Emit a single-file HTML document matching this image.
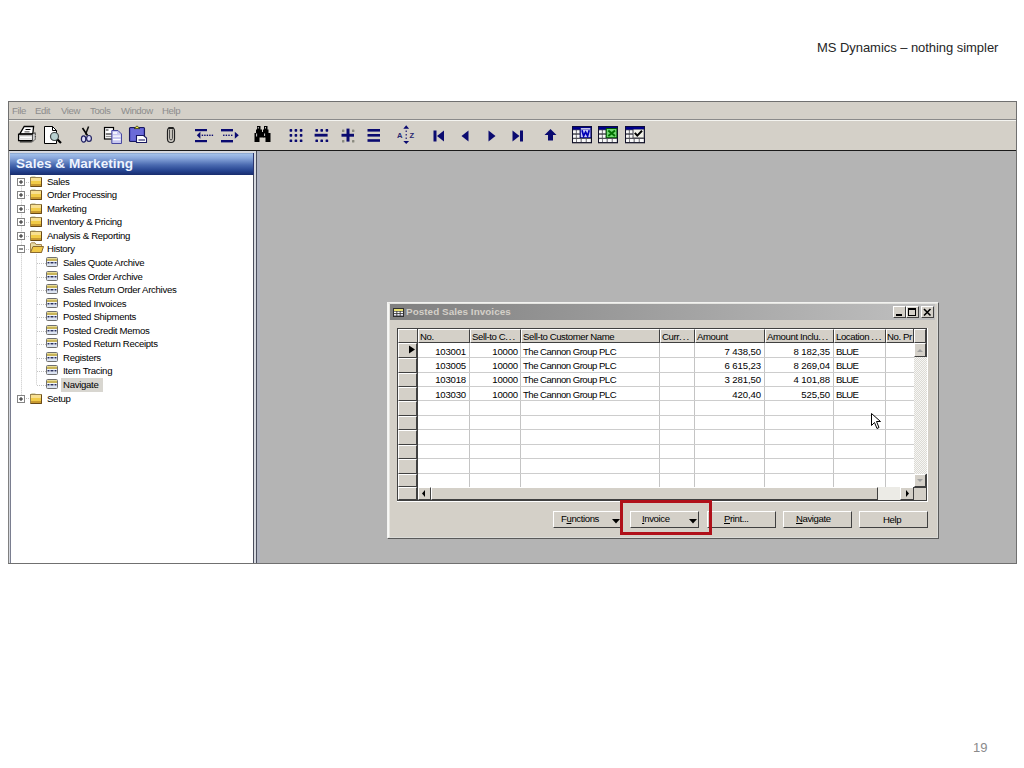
<!DOCTYPE html>
<html><head><meta charset="utf-8"><style>
*{margin:0;padding:0;box-sizing:border-box}
html,body{width:1024px;height:768px;overflow:hidden;background:#fff}
body{position:relative;font-family:"Liberation Sans",sans-serif;color:#000}
.a{position:absolute}
.t{position:absolute;white-space:nowrap;font-size:9.6px;line-height:11px;letter-spacing:-0.4px}
svg{position:absolute;overflow:visible}
.r{text-align:right}
</style></head><body>
<div class="t" style="left:817px;top:40px;font-size:13px;line-height:16px;color:#262626;letter-spacing:-0.05px">MS Dynamics – nothing simpler</div>
<div class="t" style="left:973px;top:740px;font-size:13px;line-height:15px;color:#8a8a8a;letter-spacing:0">19</div>
<div class="a" style="left:8px;top:101px;width:1009px;height:463px;border:1px solid #707070;background:#d4d0c8"></div>
<div class="a" style="left:9px;top:119px;width:1007px;height:1px;background:#8a8a8a"></div>
<div class="a" style="left:9px;top:120px;width:1007px;height:1px;background:#f4f4f0"></div>
<div class="a" style="left:9px;top:150px;width:1007px;height:1px;background:#1a1a1a"></div>
<div class="t" style="left:12px;top:105px;color:#8c8c8c">File</div>
<div class="t" style="left:35px;top:105px;color:#8c8c8c">Edit</div>
<div class="t" style="left:61px;top:105px;color:#8c8c8c">View</div>
<div class="t" style="left:90px;top:105px;color:#8c8c8c">Tools</div>
<div class="t" style="left:121px;top:105px;color:#8c8c8c">Window</div>
<div class="t" style="left:162px;top:105px;color:#8c8c8c">Help</div>
<div class="a" style="left:257px;top:151px;width:759px;height:412px;background:#b4b4b4"></div>
<div class="a" style="left:257px;top:151px;width:3px;height:412px;background:#b0b4c0"></div>
<div class="a" style="left:9px;top:151px;width:248px;height:412px;background:#d6d9e0"></div>
<div class="a" style="left:8px;top:151px;width:1px;height:412px;background:#808080"></div>
<div class="a" style="left:10px;top:175px;width:1px;height:388px;background:#7a7e90"></div>
<div class="a" style="left:253px;top:153px;width:1px;height:410px;background:#4a4e5e"></div>
<div class="a" style="left:256px;top:151px;width:1px;height:412px;background:#4a4e5e"></div>
<div class="a" style="left:11px;top:175px;width:242px;height:388px;background:#fff"></div>
<div class="a" style="left:10px;top:153px;width:243px;height:22px;background:linear-gradient(#7b95bd 0,#a3c1ea 1px,#8aa8dc 5px,#4a6ab0 12px,#24428e 18px,#182c6c 22px)"></div>
<div class="a" style="left:253px;top:153px;width:1px;height:22px;background:#2a3670"></div>
<div class="t" style="left:16px;top:155px;font-size:13.6px;line-height:17px;font-weight:bold;color:#eef4ff;letter-spacing:0px">Sales &amp; Marketing</div>
<svg style="left:0px;top:0px" width="260" height="420" viewBox="0 0 260 420"><line x1="21.5" y1="181.7" x2="21.5" y2="398.5" stroke="#c4c4c4" stroke-dasharray="1 1"/><line x1="36.5" y1="254.4" x2="36.5" y2="384.9" stroke="#c4c4c4" stroke-dasharray="1 1"/><line x1="26" y1="182.5" x2="30" y2="182.5" stroke="#c4c4c4" stroke-dasharray="1 1"/><line x1="26" y1="195.5" x2="30" y2="195.5" stroke="#c4c4c4" stroke-dasharray="1 1"/><line x1="26" y1="209.5" x2="30" y2="209.5" stroke="#c4c4c4" stroke-dasharray="1 1"/><line x1="26" y1="222.5" x2="30" y2="222.5" stroke="#c4c4c4" stroke-dasharray="1 1"/><line x1="26" y1="236.5" x2="30" y2="236.5" stroke="#c4c4c4" stroke-dasharray="1 1"/><line x1="26" y1="249.5" x2="30" y2="249.5" stroke="#c4c4c4" stroke-dasharray="1 1"/><line x1="26" y1="398.5" x2="30" y2="398.5" stroke="#c4c4c4" stroke-dasharray="1 1"/><line x1="37" y1="263.5" x2="46" y2="263.5" stroke="#c4c4c4" stroke-dasharray="1 1"/><line x1="37" y1="277.5" x2="46" y2="277.5" stroke="#c4c4c4" stroke-dasharray="1 1"/><line x1="37" y1="290.5" x2="46" y2="290.5" stroke="#c4c4c4" stroke-dasharray="1 1"/><line x1="37" y1="304.5" x2="46" y2="304.5" stroke="#c4c4c4" stroke-dasharray="1 1"/><line x1="37" y1="317.5" x2="46" y2="317.5" stroke="#c4c4c4" stroke-dasharray="1 1"/><line x1="37" y1="331.5" x2="46" y2="331.5" stroke="#c4c4c4" stroke-dasharray="1 1"/><line x1="37" y1="344.5" x2="46" y2="344.5" stroke="#c4c4c4" stroke-dasharray="1 1"/><line x1="37" y1="358.5" x2="46" y2="358.5" stroke="#c4c4c4" stroke-dasharray="1 1"/><line x1="37" y1="371.5" x2="46" y2="371.5" stroke="#c4c4c4" stroke-dasharray="1 1"/><line x1="37" y1="385.5" x2="46" y2="385.5" stroke="#c4c4c4" stroke-dasharray="1 1"/></svg>
<svg style="left:17px;top:178px" width="8" height="8" viewBox="0 0 8 8"><rect x="0.5" y="0.5" width="7" height="7" fill="#fff" stroke="#848484"/><path d="M2 4 H6" stroke="#202020"/><path d="M4 2 V6" stroke="#202020"/></svg>
<svg style="left:30px;top:176px" width="13" height="11" viewBox="0 0 13 11"><path d="M1.5 1.5 L1.5 0.8 L5 0.8 L6 1.5 Z" fill="#d8e0b0" stroke="#c0c090" stroke-width="0.8"/><rect x="0.5" y="1.5" width="11" height="9" fill="#f2cc48" stroke="#9a8450"/><rect x="1" y="2" width="10" height="3" fill="#f8e090"/><rect x="1" y="8" width="10" height="2" fill="#c89a30"/><path d="M11.5 2 V10.5 H1" fill="none" stroke="#6a4a18"/></svg>
<div class="t" style="left:47px;top:176px;letter-spacing:-0.3px">Sales</div>
<svg style="left:17px;top:191px" width="8" height="8" viewBox="0 0 8 8"><rect x="0.5" y="0.5" width="7" height="7" fill="#fff" stroke="#848484"/><path d="M2 4 H6" stroke="#202020"/><path d="M4 2 V6" stroke="#202020"/></svg>
<svg style="left:30px;top:189px" width="13" height="11" viewBox="0 0 13 11"><path d="M1.5 1.5 L1.5 0.8 L5 0.8 L6 1.5 Z" fill="#d8e0b0" stroke="#c0c090" stroke-width="0.8"/><rect x="0.5" y="1.5" width="11" height="9" fill="#f2cc48" stroke="#9a8450"/><rect x="1" y="2" width="10" height="3" fill="#f8e090"/><rect x="1" y="8" width="10" height="2" fill="#c89a30"/><path d="M11.5 2 V10.5 H1" fill="none" stroke="#6a4a18"/></svg>
<div class="t" style="left:47px;top:189px;letter-spacing:-0.3px">Order Processing</div>
<svg style="left:17px;top:205px" width="8" height="8" viewBox="0 0 8 8"><rect x="0.5" y="0.5" width="7" height="7" fill="#fff" stroke="#848484"/><path d="M2 4 H6" stroke="#202020"/><path d="M4 2 V6" stroke="#202020"/></svg>
<svg style="left:30px;top:203px" width="13" height="11" viewBox="0 0 13 11"><path d="M1.5 1.5 L1.5 0.8 L5 0.8 L6 1.5 Z" fill="#d8e0b0" stroke="#c0c090" stroke-width="0.8"/><rect x="0.5" y="1.5" width="11" height="9" fill="#f2cc48" stroke="#9a8450"/><rect x="1" y="2" width="10" height="3" fill="#f8e090"/><rect x="1" y="8" width="10" height="2" fill="#c89a30"/><path d="M11.5 2 V10.5 H1" fill="none" stroke="#6a4a18"/></svg>
<div class="t" style="left:47px;top:203px;letter-spacing:-0.3px">Marketing</div>
<svg style="left:17px;top:218px" width="8" height="8" viewBox="0 0 8 8"><rect x="0.5" y="0.5" width="7" height="7" fill="#fff" stroke="#848484"/><path d="M2 4 H6" stroke="#202020"/><path d="M4 2 V6" stroke="#202020"/></svg>
<svg style="left:30px;top:216px" width="13" height="11" viewBox="0 0 13 11"><path d="M1.5 1.5 L1.5 0.8 L5 0.8 L6 1.5 Z" fill="#d8e0b0" stroke="#c0c090" stroke-width="0.8"/><rect x="0.5" y="1.5" width="11" height="9" fill="#f2cc48" stroke="#9a8450"/><rect x="1" y="2" width="10" height="3" fill="#f8e090"/><rect x="1" y="8" width="10" height="2" fill="#c89a30"/><path d="M11.5 2 V10.5 H1" fill="none" stroke="#6a4a18"/></svg>
<div class="t" style="left:47px;top:216px;letter-spacing:-0.3px">Inventory &amp; Pricing</div>
<svg style="left:17px;top:232px" width="8" height="8" viewBox="0 0 8 8"><rect x="0.5" y="0.5" width="7" height="7" fill="#fff" stroke="#848484"/><path d="M2 4 H6" stroke="#202020"/><path d="M4 2 V6" stroke="#202020"/></svg>
<svg style="left:30px;top:230px" width="13" height="11" viewBox="0 0 13 11"><path d="M1.5 1.5 L1.5 0.8 L5 0.8 L6 1.5 Z" fill="#d8e0b0" stroke="#c0c090" stroke-width="0.8"/><rect x="0.5" y="1.5" width="11" height="9" fill="#f2cc48" stroke="#9a8450"/><rect x="1" y="2" width="10" height="3" fill="#f8e090"/><rect x="1" y="8" width="10" height="2" fill="#c89a30"/><path d="M11.5 2 V10.5 H1" fill="none" stroke="#6a4a18"/></svg>
<div class="t" style="left:47px;top:230px;letter-spacing:-0.3px">Analysis &amp; Reporting</div>
<svg style="left:17px;top:245px" width="8" height="8" viewBox="0 0 8 8"><rect x="0.5" y="0.5" width="7" height="7" fill="#fff" stroke="#848484"/><path d="M2 4 H6" stroke="#202020"/></svg>
<svg style="left:30px;top:242px" width="14" height="11" viewBox="0 0 14 11"><path d="M0.5 1.5 L0.5 10.5 L11.5 10.5 L11.5 2.5 L6 2.5 L5 0.8 L1.5 0.8 Z" fill="#e8dca8" stroke="#a88850"/><path d="M0.5 10.5 L3 4.5 L13.5 4.5 L11.5 10.5 Z" fill="#f0c848" stroke="#8a6a30"/></svg>
<div class="t" style="left:47px;top:243px;letter-spacing:-0.3px">History</div>
<svg style="left:46px;top:257px" width="12" height="10" viewBox="0 0 12 10"><rect x="0.5" y="0.5" width="11" height="9" rx="1" fill="#f0f4fa" stroke="#707070"/><rect x="1" y="1" width="10" height="3" fill="#c8b45a"/><rect x="1" y="1" width="10" height="1" fill="#e8dc98"/><path d="M1.5 5.8 H3.5 M4.5 5.8 H7.5 M8.5 5.8 H10.5" stroke="#283060" stroke-width="1.6"/><rect x="1" y="7.2" width="10" height="1.6" fill="#d8e0f0"/></svg>
<div class="t" style="left:63px;top:257px;letter-spacing:-0.3px">Sales Quote Archive</div>
<svg style="left:46px;top:271px" width="12" height="10" viewBox="0 0 12 10"><rect x="0.5" y="0.5" width="11" height="9" rx="1" fill="#f0f4fa" stroke="#707070"/><rect x="1" y="1" width="10" height="3" fill="#c8b45a"/><rect x="1" y="1" width="10" height="1" fill="#e8dc98"/><path d="M1.5 5.8 H3.5 M4.5 5.8 H7.5 M8.5 5.8 H10.5" stroke="#283060" stroke-width="1.6"/><rect x="1" y="7.2" width="10" height="1.6" fill="#d8e0f0"/></svg>
<div class="t" style="left:63px;top:271px;letter-spacing:-0.3px">Sales Order Archive</div>
<svg style="left:46px;top:284px" width="12" height="10" viewBox="0 0 12 10"><rect x="0.5" y="0.5" width="11" height="9" rx="1" fill="#f0f4fa" stroke="#707070"/><rect x="1" y="1" width="10" height="3" fill="#c8b45a"/><rect x="1" y="1" width="10" height="1" fill="#e8dc98"/><path d="M1.5 5.8 H3.5 M4.5 5.8 H7.5 M8.5 5.8 H10.5" stroke="#283060" stroke-width="1.6"/><rect x="1" y="7.2" width="10" height="1.6" fill="#d8e0f0"/></svg>
<div class="t" style="left:63px;top:284px;letter-spacing:-0.3px">Sales Return Order Archives</div>
<svg style="left:46px;top:298px" width="12" height="10" viewBox="0 0 12 10"><rect x="0.5" y="0.5" width="11" height="9" rx="1" fill="#f0f4fa" stroke="#707070"/><rect x="1" y="1" width="10" height="3" fill="#c8b45a"/><rect x="1" y="1" width="10" height="1" fill="#e8dc98"/><path d="M1.5 5.8 H3.5 M4.5 5.8 H7.5 M8.5 5.8 H10.5" stroke="#283060" stroke-width="1.6"/><rect x="1" y="7.2" width="10" height="1.6" fill="#d8e0f0"/></svg>
<div class="t" style="left:63px;top:298px;letter-spacing:-0.3px">Posted Invoices</div>
<svg style="left:46px;top:311px" width="12" height="10" viewBox="0 0 12 10"><rect x="0.5" y="0.5" width="11" height="9" rx="1" fill="#f0f4fa" stroke="#707070"/><rect x="1" y="1" width="10" height="3" fill="#c8b45a"/><rect x="1" y="1" width="10" height="1" fill="#e8dc98"/><path d="M1.5 5.8 H3.5 M4.5 5.8 H7.5 M8.5 5.8 H10.5" stroke="#283060" stroke-width="1.6"/><rect x="1" y="7.2" width="10" height="1.6" fill="#d8e0f0"/></svg>
<div class="t" style="left:63px;top:311px;letter-spacing:-0.3px">Posted Shipments</div>
<svg style="left:46px;top:325px" width="12" height="10" viewBox="0 0 12 10"><rect x="0.5" y="0.5" width="11" height="9" rx="1" fill="#f0f4fa" stroke="#707070"/><rect x="1" y="1" width="10" height="3" fill="#c8b45a"/><rect x="1" y="1" width="10" height="1" fill="#e8dc98"/><path d="M1.5 5.8 H3.5 M4.5 5.8 H7.5 M8.5 5.8 H10.5" stroke="#283060" stroke-width="1.6"/><rect x="1" y="7.2" width="10" height="1.6" fill="#d8e0f0"/></svg>
<div class="t" style="left:63px;top:325px;letter-spacing:-0.3px">Posted Credit Memos</div>
<svg style="left:46px;top:338px" width="12" height="10" viewBox="0 0 12 10"><rect x="0.5" y="0.5" width="11" height="9" rx="1" fill="#f0f4fa" stroke="#707070"/><rect x="1" y="1" width="10" height="3" fill="#c8b45a"/><rect x="1" y="1" width="10" height="1" fill="#e8dc98"/><path d="M1.5 5.8 H3.5 M4.5 5.8 H7.5 M8.5 5.8 H10.5" stroke="#283060" stroke-width="1.6"/><rect x="1" y="7.2" width="10" height="1.6" fill="#d8e0f0"/></svg>
<div class="t" style="left:63px;top:338px;letter-spacing:-0.3px">Posted Return Receipts</div>
<svg style="left:46px;top:352px" width="12" height="10" viewBox="0 0 12 10"><rect x="0.5" y="0.5" width="11" height="9" rx="1" fill="#f0f4fa" stroke="#707070"/><rect x="1" y="1" width="10" height="3" fill="#c8b45a"/><rect x="1" y="1" width="10" height="1" fill="#e8dc98"/><path d="M1.5 5.8 H3.5 M4.5 5.8 H7.5 M8.5 5.8 H10.5" stroke="#283060" stroke-width="1.6"/><rect x="1" y="7.2" width="10" height="1.6" fill="#d8e0f0"/></svg>
<div class="t" style="left:63px;top:352px;letter-spacing:-0.3px">Registers</div>
<svg style="left:46px;top:365px" width="12" height="10" viewBox="0 0 12 10"><rect x="0.5" y="0.5" width="11" height="9" rx="1" fill="#f0f4fa" stroke="#707070"/><rect x="1" y="1" width="10" height="3" fill="#c8b45a"/><rect x="1" y="1" width="10" height="1" fill="#e8dc98"/><path d="M1.5 5.8 H3.5 M4.5 5.8 H7.5 M8.5 5.8 H10.5" stroke="#283060" stroke-width="1.6"/><rect x="1" y="7.2" width="10" height="1.6" fill="#d8e0f0"/></svg>
<div class="t" style="left:63px;top:365px;letter-spacing:-0.3px">Item Tracing</div>
<div class="a" style="left:61px;top:378px;width:42px;height:14px;background:#d8d6d0"></div>
<svg style="left:46px;top:379px" width="12" height="10" viewBox="0 0 12 10"><rect x="0.5" y="0.5" width="11" height="9" rx="1" fill="#f0f4fa" stroke="#707070"/><rect x="1" y="1" width="10" height="3" fill="#c8b45a"/><rect x="1" y="1" width="10" height="1" fill="#e8dc98"/><path d="M1.5 5.8 H3.5 M4.5 5.8 H7.5 M8.5 5.8 H10.5" stroke="#283060" stroke-width="1.6"/><rect x="1" y="7.2" width="10" height="1.6" fill="#d8e0f0"/></svg>
<div class="t" style="left:63px;top:379px;letter-spacing:-0.3px">Navigate</div>
<svg style="left:17px;top:395px" width="8" height="8" viewBox="0 0 8 8"><rect x="0.5" y="0.5" width="7" height="7" fill="#fff" stroke="#848484"/><path d="M2 4 H6" stroke="#202020"/><path d="M4 2 V6" stroke="#202020"/></svg>
<svg style="left:30px;top:393px" width="13" height="11" viewBox="0 0 13 11"><path d="M1.5 1.5 L1.5 0.8 L5 0.8 L6 1.5 Z" fill="#d8e0b0" stroke="#c0c090" stroke-width="0.8"/><rect x="0.5" y="1.5" width="11" height="9" fill="#f2cc48" stroke="#9a8450"/><rect x="1" y="2" width="10" height="3" fill="#f8e090"/><rect x="1" y="8" width="10" height="2" fill="#c89a30"/><path d="M11.5 2 V10.5 H1" fill="none" stroke="#6a4a18"/></svg>
<div class="t" style="left:47px;top:393px;letter-spacing:-0.3px">Setup</div>
<div class="a" style="left:387px;top:302px;width:552px;height:237px;background:#d4d0c8;border-top:1px solid #f2f2f0;border-left:1px solid #f4f4f2;border-right:1px solid #5a5a5a;border-bottom:1px solid #5a5a5a"></div>
<div class="a" style="left:388px;top:303px;width:550px;height:235px;border-top:1px solid #e4e4e0;border-left:1px solid #f8f8f6;border-right:1px solid #dcdcd8;border-bottom:1px solid #dcdcd8"></div>
<div class="a" style="left:389px;top:304px;width:1px;height:233px;background:#e6e5e0"></div>
<div class="a" style="left:390px;top:304px;width:545px;height:16px;background:linear-gradient(90deg,#808080,#c0c0c0)"></div>
<div class="t" style="left:406px;top:306px;font-weight:bold;color:#d4d0c8;font-size:9.9px;letter-spacing:0.05px">Posted Sales Invoices</div>
<div class="a" style="left:893px;top:306px;width:13px;height:12px;background:#d4d0c8;border-top:1px solid #fff;border-left:1px solid #fff;border-right:1px solid #404040;border-bottom:1px solid #404040"></div>
<div class="a" style="left:906px;top:306px;width:13px;height:12px;background:#d4d0c8;border-top:1px solid #fff;border-left:1px solid #fff;border-right:1px solid #404040;border-bottom:1px solid #404040"></div>
<div class="a" style="left:921px;top:306px;width:13px;height:12px;background:#d4d0c8;border-top:1px solid #fff;border-left:1px solid #fff;border-right:1px solid #404040;border-bottom:1px solid #404040"></div>
<svg style="left:893px;top:306px" width="13" height="12" viewBox="0 0 13 12"><rect x="3" y="8" width="6" height="2" fill="#000"/></svg>
<svg style="left:906px;top:306px" width="13" height="12" viewBox="0 0 13 12"><rect x="2.5" y="2.5" width="7" height="7" fill="none" stroke="#000"/><rect x="2" y="2" width="8" height="2" fill="#000"/></svg>
<svg style="left:921px;top:306px" width="13" height="12" viewBox="0 0 13 12"><path d="M3 3 L9.5 9.5 M9.5 3 L3 9.5" stroke="#000" stroke-width="1.6"/></svg>
<svg style="left:393px;top:308px" width="11" height="9" viewBox="0 0 11 9"><rect x="0" y="0" width="11" height="9" fill="#303030"/><rect x="1" y="1" width="9" height="2" fill="#e8e070"/><rect x="1" y="3.6" width="2.4" height="1.6" fill="#fff"/><rect x="4.3" y="3.6" width="2.4" height="1.6" fill="#fff"/><rect x="7.6" y="3.6" width="2.4" height="1.6" fill="#fff"/><rect x="1" y="6" width="2.4" height="1.6" fill="#e8e8f8"/><rect x="4.3" y="6" width="2.4" height="1.6" fill="#e8e8f8"/><rect x="7.6" y="6" width="2.4" height="1.6" fill="#e8e8f8"/></svg>
<div class="a" style="left:397px;top:328px;width:530px;height:173px;background:#d4d0c8;border:1px solid #404040"></div>
<div class="a" style="left:398px;top:329px;width:20px;height:14px;background:#d4d0c8;border-top:1px solid #fff;border-left:1px solid #fff;border-right:1px solid #404040;border-bottom:1px solid #404040"></div>
<div class="a" style="left:418px;top:329px;width:52px;height:14px;background:#d4d0c8;border-top:1px solid #fff;border-left:1px solid #fff;border-right:1px solid #404040;border-bottom:1px solid #404040"></div>
<div class="a" style="left:470px;top:329px;width:51px;height:14px;background:#d4d0c8;border-top:1px solid #fff;border-left:1px solid #fff;border-right:1px solid #404040;border-bottom:1px solid #404040"></div>
<div class="a" style="left:521px;top:329px;width:139px;height:14px;background:#d4d0c8;border-top:1px solid #fff;border-left:1px solid #fff;border-right:1px solid #404040;border-bottom:1px solid #404040"></div>
<div class="a" style="left:660px;top:329px;width:35px;height:14px;background:#d4d0c8;border-top:1px solid #fff;border-left:1px solid #fff;border-right:1px solid #404040;border-bottom:1px solid #404040"></div>
<div class="a" style="left:695px;top:329px;width:70px;height:14px;background:#d4d0c8;border-top:1px solid #fff;border-left:1px solid #fff;border-right:1px solid #404040;border-bottom:1px solid #404040"></div>
<div class="a" style="left:765px;top:329px;width:69px;height:14px;background:#d4d0c8;border-top:1px solid #fff;border-left:1px solid #fff;border-right:1px solid #404040;border-bottom:1px solid #404040"></div>
<div class="a" style="left:834px;top:329px;width:52px;height:14px;background:#d4d0c8;border-top:1px solid #fff;border-left:1px solid #fff;border-right:1px solid #404040;border-bottom:1px solid #404040"></div>
<div class="a" style="left:886px;top:329px;width:28px;height:14px;background:#d4d0c8;border-top:1px solid #fff;border-left:1px solid #fff;border-right:1px solid #404040;border-bottom:1px solid #404040"></div>
<div class="a" style="left:914px;top:329px;width:12px;height:14px;background:#d4d0c8;border-top:1px solid #fff;border-left:1px solid #fff;border-right:1px solid #404040;border-bottom:1px solid #404040"></div>
<div class="a" style="left:418px;top:343px;width:496px;height:144px;background:#fff"></div>
<div class="a" style="left:469px;top:343px;width:1px;height:144px;background:#c4c4c4"></div>
<div class="a" style="left:520px;top:343px;width:1px;height:144px;background:#c4c4c4"></div>
<div class="a" style="left:659px;top:343px;width:1px;height:144px;background:#c4c4c4"></div>
<div class="a" style="left:694px;top:343px;width:1px;height:144px;background:#c4c4c4"></div>
<div class="a" style="left:764px;top:343px;width:1px;height:144px;background:#c4c4c4"></div>
<div class="a" style="left:833px;top:343px;width:1px;height:144px;background:#c4c4c4"></div>
<div class="a" style="left:885px;top:343px;width:1px;height:144px;background:#c4c4c4"></div>
<div class="a" style="left:418px;top:357px;width:496px;height:1px;background:#cdcdcd"></div>
<div class="a" style="left:418px;top:372px;width:496px;height:1px;background:#cdcdcd"></div>
<div class="a" style="left:418px;top:386px;width:496px;height:1px;background:#cdcdcd"></div>
<div class="a" style="left:418px;top:400px;width:496px;height:1px;background:#cdcdcd"></div>
<div class="a" style="left:418px;top:415px;width:496px;height:1px;background:#cdcdcd"></div>
<div class="a" style="left:418px;top:429px;width:496px;height:1px;background:#cdcdcd"></div>
<div class="a" style="left:418px;top:444px;width:496px;height:1px;background:#cdcdcd"></div>
<div class="a" style="left:418px;top:458px;width:496px;height:1px;background:#cdcdcd"></div>
<div class="a" style="left:418px;top:473px;width:496px;height:1px;background:#cdcdcd"></div>
<div class="a" style="left:398px;top:343px;width:19px;height:15px;background:#d4d0c8;border-top:1px solid #fff;border-left:1px solid #fff;border-right:1px solid #404040;border-bottom:1px solid #404040"></div>
<div class="a" style="left:398px;top:358px;width:19px;height:15px;background:#d4d0c8;border-top:1px solid #fff;border-left:1px solid #fff;border-right:1px solid #404040;border-bottom:1px solid #404040"></div>
<div class="a" style="left:398px;top:373px;width:19px;height:14px;background:#d4d0c8;border-top:1px solid #fff;border-left:1px solid #fff;border-right:1px solid #404040;border-bottom:1px solid #404040"></div>
<div class="a" style="left:398px;top:387px;width:19px;height:14px;background:#d4d0c8;border-top:1px solid #fff;border-left:1px solid #fff;border-right:1px solid #404040;border-bottom:1px solid #404040"></div>
<div class="a" style="left:398px;top:401px;width:19px;height:15px;background:#d4d0c8;border-top:1px solid #fff;border-left:1px solid #fff;border-right:1px solid #404040;border-bottom:1px solid #404040"></div>
<div class="a" style="left:398px;top:416px;width:19px;height:14px;background:#d4d0c8;border-top:1px solid #fff;border-left:1px solid #fff;border-right:1px solid #404040;border-bottom:1px solid #404040"></div>
<div class="a" style="left:398px;top:430px;width:19px;height:15px;background:#d4d0c8;border-top:1px solid #fff;border-left:1px solid #fff;border-right:1px solid #404040;border-bottom:1px solid #404040"></div>
<div class="a" style="left:398px;top:445px;width:19px;height:14px;background:#d4d0c8;border-top:1px solid #fff;border-left:1px solid #fff;border-right:1px solid #404040;border-bottom:1px solid #404040"></div>
<div class="a" style="left:398px;top:459px;width:19px;height:15px;background:#d4d0c8;border-top:1px solid #fff;border-left:1px solid #fff;border-right:1px solid #404040;border-bottom:1px solid #404040"></div>
<div class="a" style="left:398px;top:474px;width:19px;height:13px;background:#d4d0c8;border-top:1px solid #fff;border-left:1px solid #fff;border-right:1px solid #404040;border-bottom:1px solid #404040"></div>
<div class="a" style="left:417px;top:329px;width:1px;height:172px;background:#404040"></div>
<div class="t" style="left:420px;top:331px;">No.</div>
<div class="t" style="left:472px;top:331px;">Sell-to C<span style="letter-spacing:1px">...</span></div>
<div class="t" style="left:523px;top:331px;">Sell-to Customer Name</div>
<div class="t" style="left:662px;top:331px;">Curr<span style="letter-spacing:1px">...</span></div>
<div class="t" style="left:697px;top:331px;">Amount</div>
<div class="t" style="left:767px;top:331px;">Amount Inclu<span style="letter-spacing:1px">...</span></div>
<div class="t" style="left:836px;top:331px;">Location <span style="letter-spacing:1px">...</span></div>
<div class="t" style="left:887px;top:331px;">No. Pr</div>
<div class="a" style="left:913px;top:329px;width:1px;height:14px;background:#404040"></div>
<div class="t" style="right:558px;top:346px;letter-spacing:-0.2px">103001</div>
<div class="t" style="right:506px;top:346px;letter-spacing:-0.2px">10000</div>
<div class="t" style="left:523px;top:346px;letter-spacing:-0.52px">The Cannon Group PLC</div>
<div class="t" style="right:263px;top:346px;letter-spacing:-0.1px">7 438,50</div>
<div class="t" style="right:194px;top:346px;letter-spacing:-0.1px">8 182,35</div>
<div class="t" style="left:836px;top:346px;letter-spacing:-0.7px">BLUE</div>
<div class="t" style="right:558px;top:360px;letter-spacing:-0.2px">103005</div>
<div class="t" style="right:506px;top:360px;letter-spacing:-0.2px">10000</div>
<div class="t" style="left:523px;top:360px;letter-spacing:-0.52px">The Cannon Group PLC</div>
<div class="t" style="right:263px;top:360px;letter-spacing:-0.1px">6 615,23</div>
<div class="t" style="right:194px;top:360px;letter-spacing:-0.1px">8 269,04</div>
<div class="t" style="left:836px;top:360px;letter-spacing:-0.7px">BLUE</div>
<div class="t" style="right:558px;top:374px;letter-spacing:-0.2px">103018</div>
<div class="t" style="right:506px;top:374px;letter-spacing:-0.2px">10000</div>
<div class="t" style="left:523px;top:374px;letter-spacing:-0.52px">The Cannon Group PLC</div>
<div class="t" style="right:263px;top:374px;letter-spacing:-0.1px">3 281,50</div>
<div class="t" style="right:194px;top:374px;letter-spacing:-0.1px">4 101,88</div>
<div class="t" style="left:836px;top:374px;letter-spacing:-0.7px">BLUE</div>
<div class="t" style="right:558px;top:389px;letter-spacing:-0.2px">103030</div>
<div class="t" style="right:506px;top:389px;letter-spacing:-0.2px">10000</div>
<div class="t" style="left:523px;top:389px;letter-spacing:-0.52px">The Cannon Group PLC</div>
<div class="t" style="right:263px;top:389px;letter-spacing:-0.1px">420,40</div>
<div class="t" style="right:194px;top:389px;letter-spacing:-0.1px">525,50</div>
<div class="t" style="left:836px;top:389px;letter-spacing:-0.7px">BLUE</div>
<svg style="left:408px;top:345px" width="8" height="10" viewBox="0 0 8 10"><path d="M1 0.5 L7 4.5 L1 8.5 Z" fill="#000"/></svg>
<div class="a" style="left:914px;top:343px;width:12px;height:144px;background:#ecebe6"></div>
<div class="a" style="left:914px;top:343px;width:12px;height:14px;background:#d4d0c8;border-top:1px solid #fff;border-left:1px solid #fff;border-right:1px solid #404040;border-bottom:1px solid #404040"></div>
<svg style="left:914px;top:343px" width="12" height="14" viewBox="0 0 12 14"><path d="M3 9 L6 6 L9 9 Z" fill="#a0a0a0"/></svg>
<div class="a" style="left:914px;top:474px;width:12px;height:13px;background:#d4d0c8;border-top:1px solid #fff;border-left:1px solid #fff;border-right:1px solid #404040;border-bottom:1px solid #404040"></div>
<svg style="left:914px;top:474px" width="12" height="13" viewBox="0 0 12 13"><path d="M3 5 L6 8 L9 5 Z" fill="#a0a0a0"/></svg>
<div class="a" style="left:398px;top:487px;width:19px;height:13px;background:#d4d0c8;border-top:1px solid #fff;border-left:1px solid #fff;border-right:1px solid #404040;border-bottom:1px solid #404040"></div>
<div class="a" style="left:418px;top:487px;width:13px;height:13px;background:#d4d0c8;border-top:1px solid #fff;border-left:1px solid #fff;border-right:1px solid #404040;border-bottom:1px solid #404040"></div>
<svg style="left:418px;top:487px" width="13" height="13" viewBox="0 0 13 13"><path d="M7 3 L4 6.5 L7 10 Z" fill="#000"/></svg>
<div class="a" style="left:431px;top:487px;width:469px;height:13px;background:#ecebe6"></div>
<div class="a" style="left:431px;top:487px;width:447px;height:13px;background:#d4d0c8;border-top:1px solid #fff;border-left:1px solid #fff;border-right:1px solid #404040;border-bottom:1px solid #404040"></div>
<div class="a" style="left:900px;top:487px;width:14px;height:13px;background:#d4d0c8;border-top:1px solid #fff;border-left:1px solid #fff;border-right:1px solid #404040;border-bottom:1px solid #404040"></div>
<svg style="left:900px;top:487px" width="14" height="13" viewBox="0 0 14 13"><path d="M6 3 L9 6.5 L6 10 Z" fill="#000"/></svg>
<div class="a" style="left:913px;top:487px;width:14px;height:14px;background:#d4d0c8;border:1px solid #404040"></div>
<div class="a" style="left:914px;top:357px;width:14px;height:117px;background:repeating-conic-gradient(#f6f6f4 0 25%,#dcdad4 0 50%) 0 0/2px 2px"></div>
<div class="a" style="left:397px;top:501px;width:531px;height:1px;background:#fff"></div>
<div class="a" style="left:927px;top:328px;width:1px;height:174px;background:#fff"></div>
<div class="a" style="left:553px;top:511px;width:69px;height:17px;background:#d4d0c8;border-top:1px solid #fff;border-left:1px solid #fff;border-right:1px solid #404040;border-bottom:1px solid #404040"></div>
<div class="t" style="left:561px;top:513px;">F<u>u</u>nctions</div>
<svg style="left:612px;top:519px" width="8" height="5" viewBox="0 0 8 5"><path d="M0 0 H8 L4 4.5 Z" fill="#000"/></svg>
<div class="a" style="left:630px;top:511px;width:69px;height:17px;background:#d4d0c8;border-top:1px solid #fff;border-left:1px solid #fff;border-right:1px solid #404040;border-bottom:1px solid #404040"></div>
<div class="t" style="left:642px;top:513px;"><u>I</u>nvoice</div>
<svg style="left:689px;top:519px" width="8" height="5" viewBox="0 0 8 5"><path d="M0 0 H8 L4 4.5 Z" fill="#000"/></svg>
<div class="a" style="left:707px;top:511px;width:69px;height:17px;background:#d4d0c8;border-top:1px solid #fff;border-left:1px solid #fff;border-right:1px solid #404040;border-bottom:1px solid #404040"></div>
<div class="t" style="left:724px;top:513px;"><u>P</u>rint...</div>
<div class="a" style="left:783px;top:511px;width:69px;height:17px;background:#d4d0c8;border-top:1px solid #fff;border-left:1px solid #fff;border-right:1px solid #404040;border-bottom:1px solid #404040"></div>
<div class="t" style="left:796px;top:513px;"><u>N</u>avigate</div>
<div class="a" style="left:859px;top:511px;width:69px;height:17px;background:#d4d0c8;border-top:1px solid #fff;border-left:1px solid #fff;border-right:1px solid #404040;border-bottom:1px solid #404040"></div>
<div class="t" style="left:883px;top:514px;">Help</div>
<div class="a" style="left:620px;top:500px;width:92px;height:35px;border:3px solid #b0101a"></div>
<svg style="left:870px;top:412px" width="12" height="19" viewBox="0 0 12 19"><path d="M1.5 1.5 L1.5 13.5 L4.5 10.5 L7 16.5 L9 15.5 L6.5 9.5 L10.5 9.5 Z" fill="#fff" stroke="#000" stroke-width="1"/></svg>
<svg style="left:15px;top:123px" width="24" height="24" viewBox="0 0 24 24"><path d="M9.2 3.5 H18.6 L17.8 10.8 H4.8 Z" fill="#fff" stroke="#000" stroke-width="1.3"/><path d="M10.5 6.5 H15.5" stroke="#000" stroke-width="1"/><rect x="9.5" y="8" width="5" height="1.6" fill="#909090"/><rect x="3.6" y="11.2" width="14" height="6.4" fill="#fff" stroke="#000" stroke-width="1.3"/><rect x="4.3" y="12" width="12.6" height="1.4" fill="#b8b8b8"/><rect x="4.3" y="15" width="12.6" height="1.4" fill="#e0e0e0"/><path d="M4.8 18.8 H16.8" stroke="#303030" stroke-width="1.4"/><path d="M17.6 11.2 L20.3 9.6 V16.3 L17.6 18.6" fill="#d0d0d0" stroke="#000" stroke-width="0.9" stroke-dasharray="1 0.6"/></svg>
<svg style="left:43px;top:125px" width="20" height="20" viewBox="0 0 20 20"><path d="M1.5 1.5 H9.5 L13.5 5.5 V18.5 H1.5 Z" fill="#fff" stroke="#000"/><path d="M9.5 1.5 V5.5 H13.5" fill="none" stroke="#000"/><circle cx="11.5" cy="11.5" r="4" fill="#b8d0d0" stroke="#404848" stroke-width="1.2"/><path d="M14.5 14.5 L18 18" stroke="#000" stroke-width="2.2"/></svg>
<svg style="left:78px;top:123px" width="20" height="22" viewBox="0 0 20 22"><path d="M4.5 5 L9.5 12.5" stroke="#000" stroke-width="1.6"/><path d="M10.6 3.5 L7.5 11.5" stroke="#101010" stroke-width="1.5"/><ellipse cx="5.6" cy="16" rx="2.2" ry="3.2" fill="#dcdcf8" stroke="#202060" stroke-width="1.2"/><ellipse cx="11" cy="15.4" rx="2.4" ry="2.9" fill="#dcdcf8" stroke="#202060" stroke-width="1.2"/></svg>
<svg style="left:103px;top:126px" width="20" height="19" viewBox="0 0 20 19"><rect x="1.5" y="1.5" width="9" height="11.5" fill="#fff" stroke="#000" stroke-width="1.2"/><path d="M2.8 4 H5.5" stroke="#202020" stroke-width="1"/><path d="M2.8 8 H9" stroke="#000" stroke-width="1"/><path d="M2.8 10.5 H9" stroke="#909090" stroke-width="1.2"/><path d="M8.8 4.5 H15 L18.5 8 V17.5 H8.8 Z" fill="#c8c8f0" stroke="#4848a0" stroke-width="1"/><path d="M10 7 H14 M10 10.2 H17.5 M10 13.6 H17.5" stroke="#fff" stroke-width="1.3"/></svg>
<svg style="left:128px;top:125px" width="20" height="19" viewBox="0 0 20 19"><rect x="1.5" y="2.5" width="15" height="14" rx="1" fill="#5c5cd0" stroke="#181860" stroke-width="1.1"/><rect x="3" y="4" width="12" height="11" fill="#7a7ae0" opacity="0.5"/><path d="M6 3.6 L9 0.9 L12 3.6 Z" fill="#f0f040" stroke="#303010" stroke-width="0.8"/><path d="M8.5 10.5 H15.5 L18.5 13 V17.5 H8.5 Z" fill="#fff" stroke="#181860" stroke-width="1.1"/><path d="M10.5 15 H17" stroke="#181860" stroke-width="1.1"/></svg>
<svg style="left:166px;top:126px" width="10" height="18" viewBox="0 0 10 18"><rect x="1.5" y="1.5" width="7" height="15" rx="3.5" fill="none" stroke="#202020" stroke-width="1.2"/><path d="M3.6 3.5 V12.5 A1.4 1.4 0 0 0 6.4 12.5 V3.5" fill="none" stroke="#404040" stroke-width="1"/><rect x="2.5" y="1" width="5" height="2" fill="#202020"/></svg>
<svg style="left:194px;top:128px" width="20" height="15" viewBox="0 0 20 15"><rect x="1" y="1" width="12" height="2.2" fill="#0a0a70"/><rect x="1" y="12" width="12" height="2.2" fill="#0a0a70"/><path d="M2.8 7.3 L6.4 3.8 V10.8 Z" fill="#0a0a70"/><rect x="7.7" y="6.6" width="1.4" height="1.4" fill="#0a0a70"/><rect x="10.2" y="6.6" width="1.4" height="1.4" fill="#0a0a70"/><rect x="12.7" y="6.6" width="1.4" height="1.4" fill="#0a0a70"/><rect x="15.2" y="6.6" width="1.4" height="1.4" fill="#0a0a70"/><rect x="17.7" y="6.6" width="1.4" height="1.4" fill="#0a0a70"/></svg>
<svg style="left:220px;top:128px" width="20" height="15" viewBox="0 0 20 15"><rect x="1" y="1" width="12" height="2.4" fill="#0a0a70"/><rect x="1" y="12" width="12" height="2.4" fill="#0a0a70"/><path d="M18.8 7.3 L14.8 3.8 V10.8 Z" fill="#0a0a70"/><rect x="3.1" y="6.6" width="1.4" height="1.4" fill="#0a0a70"/><rect x="5.7" y="6.6" width="1.4" height="1.4" fill="#0a0a70"/><rect x="8.3" y="6.6" width="1.4" height="1.4" fill="#0a0a70"/><rect x="11.0" y="6.6" width="1.4" height="1.4" fill="#0a0a70"/></svg>
<svg style="left:250px;top:123px" width="24" height="24" viewBox="0 0 24 24"><path d="M7 3 H10.5 V6.5 H12 V10 H9.5 V19 H4.5 V10 H6 V6.5 H7 Z" fill="#000"/><path d="M14 3 H17.5 V6.5 H18.5 V10 H20.5 V19 H15.5 V14.5 H13 V6.5 H14 Z" fill="#000"/><rect x="9" y="9" width="4.5" height="5.5" fill="#000"/><path d="M8.3 4 V5.5 M15.5 4 V5.5 M6.6 10.5 V13.5 M14.6 10.5 V13" stroke="#e8e8e8" stroke-width="0.9"/></svg>
<svg style="left:285px;top:125px" width="20" height="20" viewBox="0 0 20 20"><rect x="4.600000000000023" y="4.099999999999994" width="2.6" height="2.6" rx="0.6" fill="#0a0a70"/><rect x="9.600000000000023" y="4.099999999999994" width="2.6" height="2.6" rx="0.6" fill="#0a0a70"/><rect x="14.800000000000011" y="4.099999999999994" width="2.6" height="2.6" rx="0.6" fill="#0a0a70"/><rect x="4.600000000000023" y="9.099999999999994" width="2.6" height="2.6" rx="0.6" fill="#0a0a70"/><rect x="9.600000000000023" y="9.099999999999994" width="2.6" height="2.6" rx="0.6" fill="#0a0a70"/><rect x="14.800000000000011" y="9.099999999999994" width="2.6" height="2.6" rx="0.6" fill="#0a0a70"/><rect x="4.600000000000023" y="14.5" width="2.6" height="2.6" rx="0.6" fill="#0a0a70"/><rect x="9.600000000000023" y="14.5" width="2.6" height="2.6" rx="0.6" fill="#0a0a70"/><rect x="14.800000000000011" y="14.5" width="2.6" height="2.6" rx="0.6" fill="#0a0a70"/></svg>
<svg style="left:310px;top:125px" width="20" height="20" viewBox="0 0 20 20"><rect x="5.399999999999977" y="4.099999999999994" width="2.6" height="2.6" rx="0.6" fill="#0a0a70"/><rect x="10.399999999999977" y="4.099999999999994" width="2.6" height="2.6" rx="0.6" fill="#0a0a70"/><rect x="15.600000000000023" y="4.099999999999994" width="2.6" height="2.6" rx="0.6" fill="#0a0a70"/><rect x="5.399999999999977" y="14.5" width="2.6" height="2.6" rx="0.6" fill="#0a0a70"/><rect x="10.399999999999977" y="14.5" width="2.6" height="2.6" rx="0.6" fill="#0a0a70"/><rect x="15.600000000000023" y="14.5" width="2.6" height="2.6" rx="0.6" fill="#0a0a70"/><rect x="4.600000000000023" y="8.800000000000011" width="13" height="2.8" fill="#0a0a70"/></svg>
<svg style="left:337px;top:125px" width="20" height="20" viewBox="0 0 20 20"><rect x="5" y="4.599999999999994" width="2.4" height="2.4" rx="0.5" fill="#8a8a80"/><rect x="15" y="4.599999999999994" width="2.4" height="2.4" rx="0.5" fill="#8a8a80"/><rect x="5" y="15" width="2.4" height="2.4" rx="0.5" fill="#8a8a80"/><rect x="15" y="15" width="2.4" height="2.4" rx="0.5" fill="#8a8a80"/><rect x="4.5" y="8.800000000000011" width="12.5" height="2.9" fill="#0a0a70"/><rect x="9.5" y="3.5999999999999943" width="3" height="13" fill="#0a0a70"/></svg>
<svg style="left:366px;top:125px" width="16" height="19" viewBox="0 0 16 19"><rect x="1.5" y="4" width="12.5" height="2.6" fill="#0a0a70"/><rect x="1.5" y="9" width="12.5" height="2.6" fill="#0a0a70"/><rect x="1.5" y="14.2" width="12.5" height="2.6" fill="#0a0a70"/></svg>
<svg style="left:392px;top:122px" width="28" height="24" viewBox="0 0 28 24"><text x="5" y="15.6" font-family="Liberation Sans" font-weight="bold" font-size="7.6" fill="#282870">A</text><text x="17.6" y="15.6" font-family="Liberation Sans" font-weight="bold" font-size="7.6" fill="#282870">Z</text><path d="M11.3 6.7 L14.2 3.3 L17.1 6.7 Z M11.3 19 L14.2 22 L17.1 19 Z" fill="#0a0a70"/><path d="M14.2 8.5 V17" stroke="#0a0a70" stroke-width="1.1" stroke-dasharray="1.5 2"/></svg>
<svg style="left:432px;top:128.5px" width="14" height="15" viewBox="0 0 14 15"><rect x="1.5" y="1.5" width="3" height="11" fill="#0a0a70"/><path d="M5 7 L12 1.5 V12.5 Z" fill="#0a0a70"/></svg>
<svg style="left:460px;top:128.5px" width="10" height="15" viewBox="0 0 10 15"><path d="M1.5 7 L8.5 1.5 V12.5 Z" fill="#0a0a70"/></svg>
<svg style="left:487px;top:128.5px" width="10" height="15" viewBox="0 0 10 15"><path d="M8.5 7 L1.5 1.5 V12.5 Z" fill="#0a0a70"/></svg>
<svg style="left:511px;top:128.5px" width="14" height="15" viewBox="0 0 14 15"><path d="M8.5 7 L1.5 1.5 V12.5 Z" fill="#0a0a70"/><rect x="9" y="1.5" width="3" height="11" fill="#0a0a70"/></svg>
<svg style="left:544px;top:128px" width="14" height="15" viewBox="0 0 14 15"><path d="M6.5 1 L12.5 7 H9 V12.5 H4 V7 H0.5 Z" fill="#0a0a70"/></svg>
<svg style="left:572px;top:126px" width="20" height="18" viewBox="0 0 20 18"><rect x="0" y="0" width="20" height="17.3" fill="#101028"/><rect x="1" y="1" width="18" height="15.3" fill="#505058"/><rect x="0.8" y="0.8" width="18.4" height="2.8" fill="#00008a"/><rect x="1.0" y="4.2" width="2.9" height="3" rx="0.5" fill="#f8f8f8"/><rect x="4.7" y="4.2" width="2.9" height="3" rx="0.5" fill="#f8f8f8"/><rect x="1.0" y="8.8" width="2.9" height="3" rx="0.5" fill="#f8f8f8"/><rect x="4.7" y="8.8" width="2.9" height="3" rx="0.5" fill="#f8f8f8"/><rect x="1.0" y="12.9" width="3.1" height="3" rx="0.5" fill="#f8f8f8"/><rect x="4.8" y="12.9" width="3.9" height="3" rx="0.5" fill="#f8f8f8"/><rect x="9.6" y="12.9" width="4.2" height="3" rx="0.5" fill="#f8f8f8"/><rect x="14.6" y="12.9" width="4.2" height="3" rx="0.5" fill="#f8f8f8"/><rect x="7.8" y="2" width="11.4" height="10" fill="#000080"/><rect x="8.8" y="2.2" width="9.6" height="1.2" fill="#f0f0ff"/><rect x="8.8" y="3.6" width="9.6" height="7.6" fill="#c8c8f8"/><path d="M10 4.2 L11.6 10 L13.6 6.2 L15.6 10 L17.2 4.2" fill="none" stroke="#0000b8" stroke-width="1.7"/></svg>
<svg style="left:598px;top:126px" width="20" height="18" viewBox="0 0 20 18"><rect x="0" y="0" width="20" height="17.3" fill="#101028"/><rect x="1" y="1" width="18" height="15.3" fill="#505058"/><rect x="0.8" y="0.8" width="18.4" height="2.8" fill="#00008a"/><rect x="1.0" y="4.2" width="2.9" height="3" rx="0.5" fill="#f8f8f8"/><rect x="4.7" y="4.2" width="2.9" height="3" rx="0.5" fill="#f8f8f8"/><rect x="1.0" y="8.8" width="2.9" height="3" rx="0.5" fill="#f8f8f8"/><rect x="4.7" y="8.8" width="2.9" height="3" rx="0.5" fill="#f8f8f8"/><rect x="1.0" y="12.9" width="3.1" height="3" rx="0.5" fill="#f8f8f8"/><rect x="4.8" y="12.9" width="3.9" height="3" rx="0.5" fill="#f8f8f8"/><rect x="9.6" y="12.9" width="4.2" height="3" rx="0.5" fill="#f8f8f8"/><rect x="14.6" y="12.9" width="4.2" height="3" rx="0.5" fill="#f8f8f8"/><rect x="7.8" y="2" width="11.4" height="10" fill="#005000"/><rect x="8.8" y="3" width="9.6" height="8.2" fill="#70d870"/><path d="M10.3 4.5 L17 10 M17 4.5 L10.3 10" stroke="#007000" stroke-width="2"/></svg>
<svg style="left:625px;top:126px" width="20" height="18" viewBox="0 0 20 18"><rect x="0" y="0" width="20" height="17.3" fill="#101028"/><rect x="1" y="1" width="18" height="15.3" fill="#505058"/><rect x="0.8" y="0.8" width="18.4" height="2.8" fill="#00008a"/><rect x="1.0" y="4.2" width="2.9" height="3" rx="0.5" fill="#f8f8f8"/><rect x="4.7" y="4.2" width="2.9" height="3" rx="0.5" fill="#f8f8f8"/><rect x="1.0" y="8.8" width="2.9" height="3" rx="0.5" fill="#f8f8f8"/><rect x="4.7" y="8.8" width="2.9" height="3" rx="0.5" fill="#f8f8f8"/><rect x="1.0" y="12.9" width="3.1" height="3" rx="0.5" fill="#f8f8f8"/><rect x="4.8" y="12.9" width="3.9" height="3" rx="0.5" fill="#f8f8f8"/><rect x="9.6" y="12.9" width="4.2" height="3" rx="0.5" fill="#f8f8f8"/><rect x="14.6" y="12.9" width="4.2" height="3" rx="0.5" fill="#f8f8f8"/><rect x="7.8" y="3.6" width="11.4" height="8.4" fill="#585860"/><rect x="8.6" y="3.6" width="10" height="7.8" fill="#f2f2ea"/><path d="M9.8 6.8 L12.3 9.6 L17 4.8" fill="none" stroke="#000" stroke-width="2"/></svg>
</body></html>
